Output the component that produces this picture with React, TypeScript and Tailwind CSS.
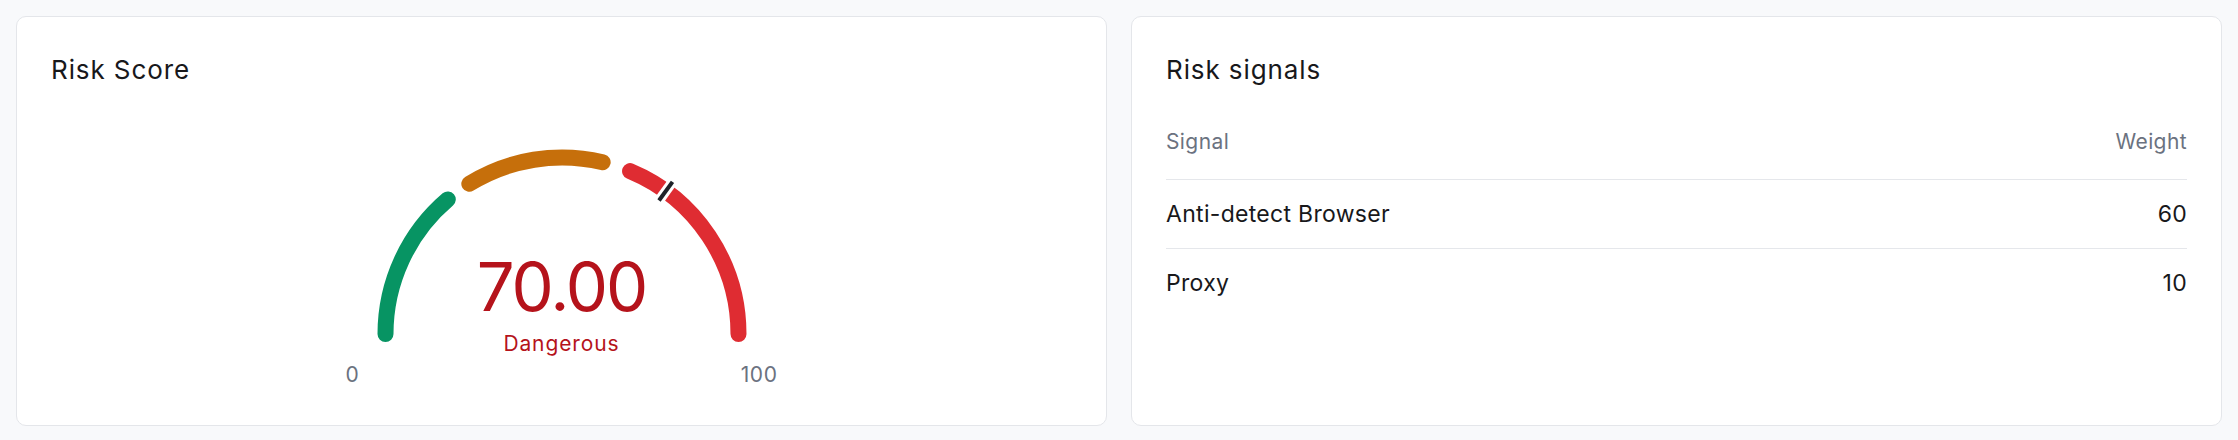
import React from 'react';

type Segment = { from: number; to: number; color: string };

const CX = 216;
const CY = 194;
const R = 176.5;
const STROKE = 16;

const segments: Segment[] = [
  { from: 0, to: 27.6, color: '#079463' },
  { from: 32.4, to: 57.4, color: '#c66f0b' },
  { from: 62.6, to: 100, color: '#df2c32' },
];

const signals = [
  { name: 'Anti-detect Browser', weight: 60 },
  { name: 'Proxy', weight: 10 },
];

// value 0..100 maps onto the upper half circle, left to right
const pointAt = (value: number, radius: number) => {
  const angle = ((180 - value * 1.8) * Math.PI) / 180;
  return { x: CX + radius * Math.cos(angle), y: CY - radius * Math.sin(angle) };
};

const arcPath = (from: number, to: number) => {
  const a = pointAt(from, R);
  const b = pointAt(to, R);
  return `M ${a.x} ${a.y} A ${R} ${R} 0 0 1 ${b.x} ${b.y}`;
};

const Gauge: React.FC<{ value: number; label: string }> = ({ value, label }) => {
  const inner = pointAt(value, R - 11.5);
  const outer = pointAt(value, R + 11.5);

  return (
    <div className="flex flex-col items-center">
      <div className="relative w-[432px] h-[204px]">
        <svg width="432" height="204" viewBox="0 0 432 204">
          {segments.map((s) => (
            <path
              key={s.from}
              d={arcPath(s.from, s.to)}
              fill="none"
              stroke={s.color}
              strokeWidth={STROKE}
              strokeLinecap="round"
            />
          ))}
          {/* value marker */}
          <line x1={inner.x} y1={inner.y} x2={outer.x} y2={outer.y} stroke="#ffffff" strokeWidth={10} />
          <line x1={inner.x} y1={inner.y} x2={outer.x} y2={outer.y} stroke="#1f2329" strokeWidth={4} />
        </svg>
        <div className="absolute inset-x-0 top-[113px] flex flex-col items-center">
          <span className="text-[67px] leading-[67px] tracking-[-2px] text-[#b5131b]">{value.toFixed(2)}</span>
          <span className="mt-[10px] text-[21px] leading-[28px] tracking-[0.9px] text-[#b5131b]">{label}</span>
        </div>
      </div>
      <div className="mt-[17px] flex w-[432px] justify-between text-[21px] leading-[28px] tracking-[0.6px] text-[#6b7280]">
        <span>0</span>
        <span>100</span>
      </div>
    </div>
  );
};

const App: React.FC = () => {
  return (
    <div
      className="min-h-screen bg-[#f8f9fb] px-4 pt-4 pb-[14px]"
      style={{ fontFamily: 'Inter, "Noto Sans", sans-serif' }}
    >
      <div className="grid grid-cols-2 gap-6">
        {/* Risk score card */}
        <div className="h-[410px] rounded-[10px] border border-[#e4e6ea] bg-white px-[34px] pt-[35px]">
          <h2 className="text-[26px] leading-[35px] tracking-[0.9px] text-[#18181b]">Risk Score</h2>
          <div className="mt-[53px]">
            <Gauge value={70} label="Dangerous" />
          </div>
        </div>

        {/* Risk signals card */}
        <div className="h-[410px] rounded-[10px] border border-[#e4e6ea] bg-white px-[34px] pt-[35px]">
          <h2 className="text-[26px] leading-[35px] tracking-[0.9px] text-[#18181b]">Risk signals</h2>
          <div className="mt-[41px]">
            <div className="flex justify-between border-b border-[#e5e7eb] pb-[23px] text-[21px] leading-[28px] tracking-[0.4px] text-[#6b7280]">
              <span>Signal</span>
              <span>Weight</span>
            </div>
            {signals.map((s, i) => (
              <div
                key={s.name}
                className={`flex h-[69px] items-center justify-between text-[23px] leading-[31px] tracking-[0.3px] text-[#18181b] ${
                  i < signals.length - 1 ? 'border-b border-[#e5e7eb]' : ''
                }`}
              >
                <span>{s.name}</span>
                <span>{s.weight}</span>
              </div>
            ))}
          </div>
        </div>
      </div>
    </div>
  );
};

export default App;
